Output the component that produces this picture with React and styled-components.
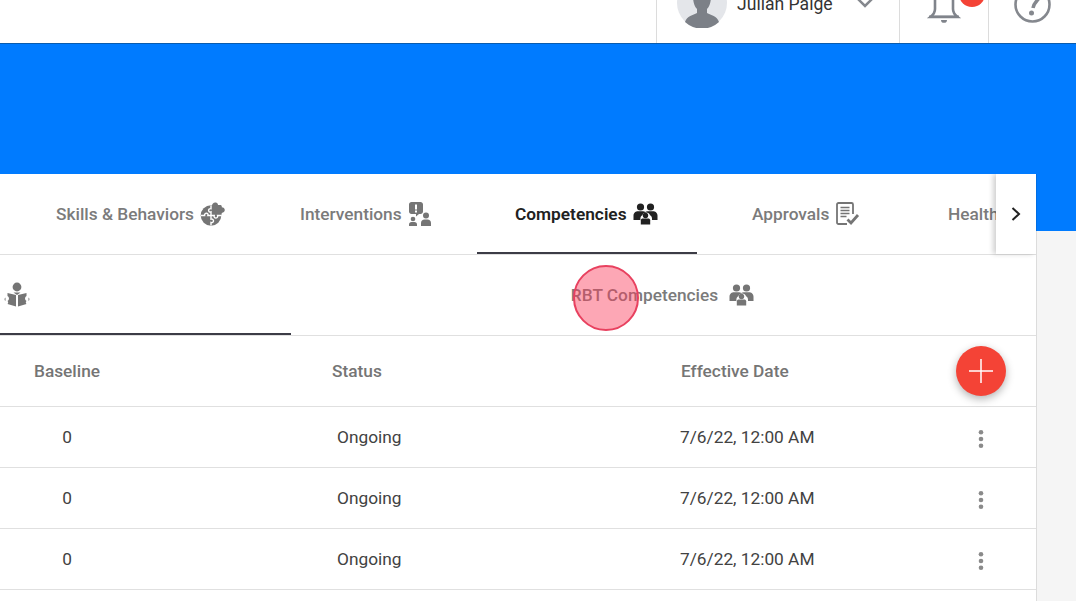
import React from "react";
import styled, { createGlobalStyle } from "styled-components";

const Global = createGlobalStyle`
  html, body {
    margin: 0;
    height: 601px;
    overflow: hidden;
    background: #f5f5f5;
    font-family: Roboto, "Liberation Sans", sans-serif;
  }
`;

const Header = styled.header`
  height: 43px;
  background: #fff;
  border-bottom: 1px solid #0a5cae;
  display: flex;
  justify-content: flex-end;
  align-items: flex-end;
  overflow: hidden;
`;

const HeaderCell = styled.div`
  width: ${(p) => p.$w}px;
  height: 43px;
  box-sizing: border-box;
  border-left: 1px solid #dcdcdc;
  padding-left: ${(p) => p.$pad}px;
  display: flex;
  align-items: flex-end;
  flex-shrink: 0;
`;

const Avatar = styled.svg`
  width: 50px;
  height: 50px;
  margin-bottom: 15px;
  flex-shrink: 0;
`;

const UserName = styled.span`
  margin: 0 22px 0 10px;
  padding-bottom: 29px;
  font-size: 17.6px;
  line-height: 19px;
  color: #333;
  white-space: nowrap;
`;

const Chevron = styled.svg`
  width: 20px;
  height: 12px;
  margin-bottom: 35px;
  flex-shrink: 0;
`;

const BellWrap = styled.div`
  position: relative;
  width: 32px;
  height: 36px;
  margin-bottom: 16.5px;
  svg {
    display: block;
    overflow: visible;
  }
`;

const Badge = styled.span`
  position: absolute;
  left: 31px;
  top: -9.5px;
  width: 26px;
  height: 26px;
  border-radius: 50%;
  background: #f44336;
`;

const HelpIcon = styled.svg`
  width: 37px;
  height: 37px;
  margin-bottom: 20px;
  flex-shrink: 0;
`;

const Band = styled.div`
  height: 187px;
  background: #007bff;
`;

const Card = styled.main`
  position: relative;
  width: 1036px;
  margin-top: -57px;
  height: 427px;
  background: #fff;
  box-shadow: 1px 0 0 rgba(0, 0, 0, 0.1);
  overflow: hidden;
`;

const TabBar = styled.nav`
  height: 80px;
  display: flex;
  border-bottom: 1px solid #e0e0e0;
`;

const TabScroller = styled.div`
  flex: 1;
  display: flex;
  overflow: hidden;
`;

const Tab = styled.div`
  flex: 0 0 ${(p) => p.$w}px;
  box-sizing: border-box;
  height: 80px;
  padding-top: 2px;
  padding-left: ${(p) => p.$pad}px;
  display: flex;
  align-items: center;
  gap: 6px;
  font-size: 17.3px;
  font-weight: ${(p) => (p.$active ? 600 : 500)};
  color: ${(p) => (p.$active ? "#212121" : "#7b7b7b")};
  border-bottom: 2px solid ${(p) => (p.$active ? "#3c3c46" : "transparent")};
  white-space: nowrap;
  svg {
    flex-shrink: 0;
  }
`;

const ScrollButton = styled.div`
  flex: 0 0 40px;
  height: 80px;
  background: #fff;
  box-shadow: -3px 0 5px rgba(0, 0, 0, 0.18);
  display: flex;
  align-items: center;
  justify-content: center;
  color: #212121;
  z-index: 1;
`;

const SubBar = styled.div`
  height: 80px;
  display: flex;
  border-bottom: 1px solid #e0e0e0;
`;

const SubTab = styled.div`
  flex: ${(p) => (p.$active ? "0 0 291px" : "1")};
  box-sizing: border-box;
  padding-left: ${(p) => (p.$active ? "4px" : "0")};
  padding-right: ${(p) => (p.$active ? "0" : "2px")};
  display: flex;
  align-items: center;
  justify-content: ${(p) => (p.$active ? "flex-start" : "center")};
  gap: 11px;
  font-size: 17.3px;
  font-weight: 500;
  color: #7b7b7b;
  border-bottom: ${(p) => (p.$active ? "2px solid #3c3c46" : "none")};
`;

const columns = "134px 198px 348px 251px 100px";

const HeadRow = styled.div`
  display: grid;
  grid-template-columns: ${columns};
  align-items: center;
  height: 70px;
  border-bottom: 1px solid #e0e0e0;
  font-size: 17.3px;
  font-weight: 500;
  color: #757575;
`;

const Row = styled.div`
  display: grid;
  grid-template-columns: ${columns};
  align-items: center;
  height: 60px;
  border-bottom: 1px solid #e0e0e0;
  font-size: 17.3px;
  color: #424242;
`;

const Centered = styled.div`
  text-align: center;
  grid-column: 1;
`;

const Cell = styled.div`
  grid-column: ${(p) => p.$col};
  padding-left: ${(p) => p.$shift || 0}px;
  white-space: nowrap;
`;

const Fab = styled.div`
  grid-column: 5;
  width: 50px;
  height: 50px;
  border-radius: 50%;
  background: #f44336;
  box-shadow: 0 3px 8px rgba(0, 0, 0, 0.3);
  justify-self: center;
  display: flex;
  align-items: center;
  justify-content: center;
`;

const Kebab = styled.svg`
  grid-column: 5;
  width: 8px;
  height: 20px;
  margin-top: 4px;
  justify-self: center;
`;

const Touch = styled.div`
  position: absolute;
  left: 573px;
  top: 91px;
  width: 66px;
  height: 66px;
  box-sizing: border-box;
  border-radius: 50%;
  background: rgba(250, 60, 90, 0.45);
  border: 2.5px solid #e8415f;
`;

const People = ({ color }) => (
  <svg width="25" height="22" viewBox="0 0 25 22" fill={color}>
    <circle cx="7.5" cy="4" r="3.6" />
    <circle cx="17.5" cy="4" r="3.6" />
    <path d="M0.5 17v-4.5C0.5 9.8 3 8.3 5 8.3h5c.9 0 1.6.3 2.3.8.7-.5 1.5-.8 2.4-.8h5.300c2 0 4.500 1.500 4.500 4.200V17h-5.500v-1.500c0-1.500-.8-2.700-2-3.300a4 4 0 0 0-7.600 0c-1.200.6-2 1.800-2 3.300V17z" />
    <circle cx="12.500" cy="12.500" r="2.700" />
    <path d="M7.800 21.500v-4.200c0-1.300 1-1.900 2-1.900h5.400c1 0 2 .6 2 1.900v4.200z" />
  </svg>
);

const Puzzle = () => (
  <svg width="25" height="24" viewBox="0 0 25 24" fill="#757575">
    <circle cx="11" cy="13.500" r="10.300" />
    <path d="M12 3.500c0-2 2-3.500 4-3 1.500.4 2 1.500 2 2.500h2.500c1 0 1.500 1 1.300 2.300 1.700 0 3 1.200 3 2.800s-1.300 2.800-3 2.800c-.3 1-.3 1.800-.8 2.600H12z" />
    <path
      d="M11 3.500v3.200c-1.800-.4-2.800 1-2.300 2.200.4 1 1.500 1.200 2.300.9v3.700M1 13.500h3.600c-.3-1.600 1-2.600 2.100-2.300 1.200.3 1.700 1.500 1.200 2.300H11M11 13.500h3.200c-.5 1.500.6 2.700 1.800 2.600 1.300-.1 2-1.300 1.600-2.600h4.200M11 13.500v3.600c1.500-.4 2.700.7 2.500 2-.2 1.200-1.300 1.800-2.500 1.400v3"
      fill="none"
      stroke="#fff"
      strokeWidth="1.400"
    />
  </svg>
);

const Alert = () => (
  <svg width="25" height="24" viewBox="0 0 25 24" fill="#757575">
    <path d="M3.500 0h9c1.400 0 2.500 1.100 2.500 2.500v7c0 1.400-1.100 2.500-2.500 2.500H11l-3 2.500V12H3.500C2.100 12 1 10.900 1 9.500v-7C1 1.100 2.100 0 3.500 0z" />
    <rect x="7" y="2.500" width="2" height="5" fill="#fff" />
    <rect x="7" y="8.500" width="2" height="2" fill="#fff" />
    <circle cx="5" cy="17" r="2.300" />
    <path d="M1 24v-1.500c0-1.500 1-2.500 2.500-2.500h3C8 20 9 21 9 22.500V24z" />
    <circle cx="18" cy="13.500" r="3" />
    <path d="M13 24v-3c0-2 1.500-3.500 3.500-3.500h3c2 0 3.500 1.500 3.500 3.500v3z" />
  </svg>
);

const Doc = () => (
  <svg width="25" height="24" viewBox="0 0 25 24" fill="none" stroke="#757575" strokeWidth="1.800">
    <path d="M12 22H3.500A1.500 1.500 0 0 1 2 20.500v-18A1.500 1.500 0 0 1 3.500 1h13A1.500 1.500 0 0 1 18 2.500V12" />
    <path d="M5.500 5.500h9M5.500 8.500h9M5.500 11.500h9M5.500 14.500h6" strokeWidth="1.500" />
    <path d="M12.500 17.500l3.500 3.500 7-8" strokeWidth="2.800" />
  </svg>
);

const Reader = () => (
  <svg width="26" height="25" viewBox="0 0 26 25" fill="#757575">
    <circle cx="13" cy="5" r="4.400" />
    <path d="M9.500 10.500h7L13 13z" />
    <path d="M3.500 11 12 13v11.500L3.500 22c.8-1 1-2 0-3 2-1 2-4 0-5z" />
    <path d="M22.500 11 14 13v11.500l8.500-2.500c-.8-1-1-2 0-3-2-1-2-4 0-5z" />
    <path d="M1.500 15.500c-1.300.8-1.300 3 0 3.500zM24.500 15.500c1.300.8 1.300 3 0 3.500z" />
  </svg>
);

const rows = [0, 1, 2];

export default function App() {
  return (
    <>
      <Global />
      <Header>
        <HeaderCell $w={243} $pad={20}>
          <Avatar viewBox="0 0 50 50">
            <circle cx="25" cy="25" r="25" fill="#e4e6ea" />
            <path
              d="M8 44c2-6 8-7 12-9v-4c-3-3-4-8-4-13 0-7 4-11 9-11s9 4 9 11c0 5-1 10-4 13v4c4 2 10 3 12 9a25 25 0 0 1-34 0z"
              fill="#7c8087"
            />
          </Avatar>
          <UserName>Julian Paige</UserName>
          <Chevron viewBox="0 0 20 12">
            <path d="M1.500 1.500 10 10l8.500-8.500" fill="none" stroke="#85888e" strokeWidth="2.500" />
          </Chevron>
        </HeaderCell>
        <HeaderCell $w={89} $pad={28}>
          <BellWrap>
            <svg width="32" height="36" viewBox="0 0 32 36">
              <path
                d="M7 -6V18c0 4-2 6-4.500 8h27c-2.500-2-4.500-4-4.500-8V-6"
                fill="none"
                stroke="#80848b"
                strokeWidth="2.600"
              />
              <path d="M1 24.500h30v2.500H1zM13 29h6c0 2-1.200 2.800-3 2.800s-3-.8-3-2.800z" fill="#80848b" />
            </svg>
            <Badge />
          </BellWrap>
        </HeaderCell>
        <HeaderCell $w={88} $pad={25}>
          <HelpIcon viewBox="0 0 37 37">
            <circle cx="18.500" cy="18.500" r="17" fill="none" stroke="#85888e" strokeWidth="2.600" />
            <path
              d="M12 9c0-3 3-6 7-6 5 0 7 3 7 6 0 5-6 6-7 13"
              fill="none"
              stroke="#85888e"
              strokeWidth="3.500"
            />
            <circle cx="17.500" cy="27" r="2.500" fill="#85888e" />
          </HelpIcon>
        </HeaderCell>
      </Header>
      <Band />
      <Card>
        <TabBar>
          <TabScroller>
            <Tab $w={257} $pad={56}>
              Skills &amp; Behaviors <Puzzle />
            </Tab>
            <Tab $w={220} $pad={43}>
              Interventions <Alert />
            </Tab>
            <Tab $w={220} $pad={38} $active>
              Competencies <People color="#212121" />
            </Tab>
            <Tab $w={220} $pad={55}>
              Approvals <Doc />
            </Tab>
            <Tab $w={220} $pad={31}>
              Health
            </Tab>
          </TabScroller>
          <ScrollButton>
            <svg width="12" height="16" viewBox="0 0 12 16">
              <path d="M2.500 2 9 8l-6.500 6" fill="none" stroke="#212121" strokeWidth="2" />
            </svg>
          </ScrollButton>
        </TabBar>
        <SubBar>
          <SubTab $active>
            <Reader />
          </SubTab>
          <SubTab>
            RBT Competencies <People color="#757575" />
          </SubTab>
        </SubBar>
        <HeadRow>
          <Centered>Baseline</Centered>
          <Cell $col={3}>Status</Cell>
          <Cell $col={4} $shift={1}>Effective Date</Cell>
          <Fab>
            <svg width="24" height="24" viewBox="0 0 24 24">
              <path d="M12 0v24M0 12h24" stroke="#fff" strokeWidth="1.500" />
            </svg>
          </Fab>
        </HeadRow>
        {rows.map((r) => (
          <Row key={r}>
            <Centered>0</Centered>
            <Cell $col={3} $shift={5}>Ongoing</Cell>
            <Cell $col={4}>7/6/22, 12:00 AM</Cell>
            <Kebab viewBox="0 0 8 20">
              <circle cx="4" cy="3.300" r="2.300" fill="#8a8a8a" />
              <circle cx="4" cy="10" r="2.300" fill="#8a8a8a" />
              <circle cx="4" cy="16.700" r="2.300" fill="#8a8a8a" />
            </Kebab>
          </Row>
        ))}
        <Touch />
      </Card>
    </>
  );
}
